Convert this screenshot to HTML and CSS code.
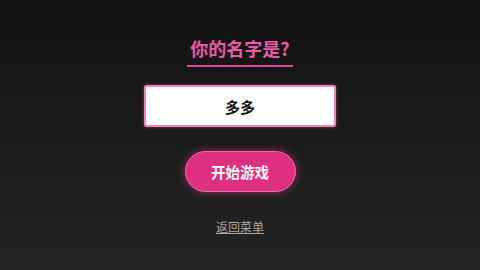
FILE: index.html
```html
<!DOCTYPE html>
<html lang="zh">
<head>
<meta charset="utf-8">
<link rel="stylesheet" href="styles.css">
</head>
<body>
<main class="screen">
  <h1 class="title">你的名字是?</h1>
  <div class="name-box">多多</div>
  <button class="start">开始游戏</button>
  <a class="back" href="#">返回菜单</a>
</main>
</body>
</html>
```
FILE: styles.css
```css
html, body {
  margin: 0;
  padding: 0;
  width: 480px;
  height: 270px;
  overflow: hidden;
}
body {
  background: linear-gradient(180deg, #121212 0%, #1b1b1b 50%, #242424 100%);
  font-family: "Noto Sans CJK SC", "Noto Sans", sans-serif;
}
.screen {
  height: 270px;
  display: flex;
  flex-direction: column;
  align-items: center;
  padding-top: 36px;
  box-sizing: border-box;
}
.title {
  margin: 0;
  font-size: 18px;
  line-height: 24px;
  font-weight: 700;
  color: #e95ba6;
  padding: 0 3px 5px;
  border-bottom: 2px solid #e0488f;
}
.name-box {
  margin-top: 18px;
  width: 188px;
  height: 38px;
  background: #fff;
  border: 2px solid #ee86be;
  border-radius: 3px;
  box-shadow: 0 0 3px rgba(240, 120, 190, 0.5);
  display: flex;
  align-items: center;
  justify-content: center;
  font-size: 15px;
  font-weight: 700;
  color: #111;
}
.start {
  margin-top: 24px;
  width: 111px;
  height: 41px;
  border: 1px solid #f26aa8;
  border-radius: 21px;
  background: #df2f7f;
  color: #fff;
  font-family: inherit;
  font-size: 14.5px;
  font-weight: 700;
  box-shadow: 0 0 8px rgba(233, 60, 140, 0.55);
  padding: 0;
}
.back {
  margin-top: 26px;
  font-size: 12px;
  line-height: 17px;
  color: #a6a6a6;
  text-decoration: underline;
}
```
